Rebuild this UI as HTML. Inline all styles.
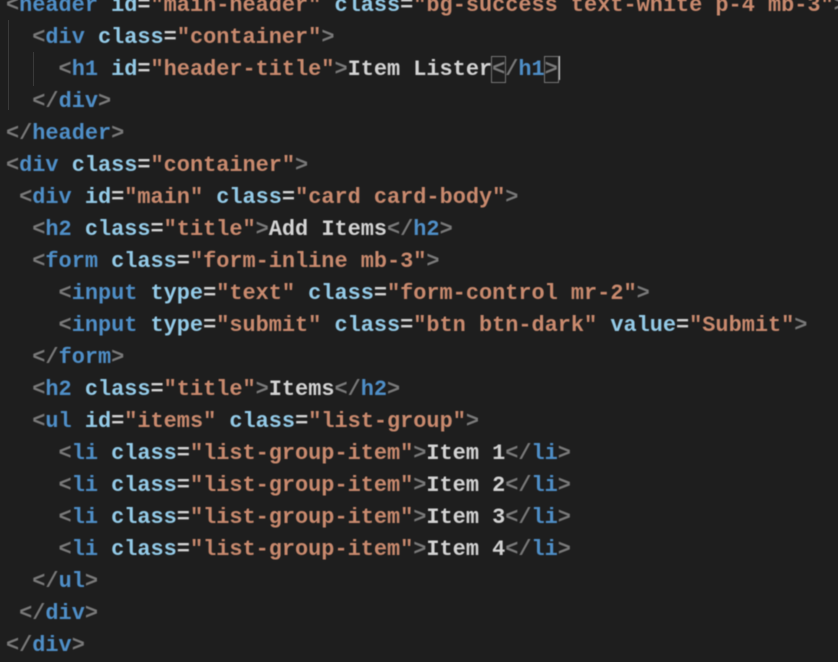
<!DOCTYPE html>
<html><head><meta charset="utf-8"><style>
html,body{margin:0;padding:0;background:#1e1e1e;width:838px;height:660px;overflow:hidden}
pre{margin:0;position:absolute;left:6px;top:-10px;font-family:"Liberation Mono",monospace;font-size:21.9px;line-height:32px;color:#d4d4d4;font-weight:bold;letter-spacing:0;filter:blur(0.6px)}
.t{color:#4f8fc8}.a{color:#94cbe8}.s{color:#c98a6e}.p{color:#7a7a7a}
.g{position:absolute;width:1px;background:#3a3a3a}
.cur{display:inline-block;width:2px;height:24px;background:#d4d4d4;vertical-align:-5px}
.bx{outline:1px solid #777}
</style></head><body>
<div class="g" style="left:8px;top:20px;height:90px"></div>
<div class="g" style="left:33px;top:52px;height:34px"></div>
<pre><span class="p">&lt;</span><span class="t">header</span> <span class="a">id</span>=<span class="s">"main-header"</span> <span class="a">class</span>=<span class="s">"bg-success text-white p-4 mb-3"</span><span class="p">&gt;</span>
  <span class="p">&lt;</span><span class="t">div</span> <span class="a">class</span>=<span class="s">"container"</span><span class="p">&gt;</span>
    <span class="p">&lt;</span><span class="t">h1</span> <span class="a">id</span>=<span class="s">"header-title"</span><span class="p">&gt;</span>Item Lister<span class="p bx">&lt;</span><span class="p">/</span><span class="t">h1</span><span class="p bx">&gt;</span><span class="cur"></span>
  <span class="p">&lt;/</span><span class="t">div</span><span class="p">&gt;</span>
<span class="p">&lt;/</span><span class="t">header</span><span class="p">&gt;</span>
<span class="p">&lt;</span><span class="t">div</span> <span class="a">class</span>=<span class="s">"container"</span><span class="p">&gt;</span>
 <span class="p">&lt;</span><span class="t">div</span> <span class="a">id</span>=<span class="s">"main"</span> <span class="a">class</span>=<span class="s">"card card-body"</span><span class="p">&gt;</span>
  <span class="p">&lt;</span><span class="t">h2</span> <span class="a">class</span>=<span class="s">"title"</span><span class="p">&gt;</span>Add Items<span class="p">&lt;/</span><span class="t">h2</span><span class="p">&gt;</span>
  <span class="p">&lt;</span><span class="t">form</span> <span class="a">class</span>=<span class="s">"form-inline mb-3"</span><span class="p">&gt;</span>
    <span class="p">&lt;</span><span class="t">input</span> <span class="a">type</span>=<span class="s">"text"</span> <span class="a">class</span>=<span class="s">"form-control mr-2"</span><span class="p">&gt;</span>
    <span class="p">&lt;</span><span class="t">input</span> <span class="a">type</span>=<span class="s">"submit"</span> <span class="a">class</span>=<span class="s">"btn btn-dark"</span> <span class="a">value</span>=<span class="s">"Submit"</span><span class="p">&gt;</span>
  <span class="p">&lt;/</span><span class="t">form</span><span class="p">&gt;</span>
  <span class="p">&lt;</span><span class="t">h2</span> <span class="a">class</span>=<span class="s">"title"</span><span class="p">&gt;</span>Items<span class="p">&lt;/</span><span class="t">h2</span><span class="p">&gt;</span>
  <span class="p">&lt;</span><span class="t">ul</span> <span class="a">id</span>=<span class="s">"items"</span> <span class="a">class</span>=<span class="s">"list-group"</span><span class="p">&gt;</span>
    <span class="p">&lt;</span><span class="t">li</span> <span class="a">class</span>=<span class="s">"list-group-item"</span><span class="p">&gt;</span>Item 1<span class="p">&lt;/</span><span class="t">li</span><span class="p">&gt;</span>
    <span class="p">&lt;</span><span class="t">li</span> <span class="a">class</span>=<span class="s">"list-group-item"</span><span class="p">&gt;</span>Item 2<span class="p">&lt;/</span><span class="t">li</span><span class="p">&gt;</span>
    <span class="p">&lt;</span><span class="t">li</span> <span class="a">class</span>=<span class="s">"list-group-item"</span><span class="p">&gt;</span>Item 3<span class="p">&lt;/</span><span class="t">li</span><span class="p">&gt;</span>
    <span class="p">&lt;</span><span class="t">li</span> <span class="a">class</span>=<span class="s">"list-group-item"</span><span class="p">&gt;</span>Item 4<span class="p">&lt;/</span><span class="t">li</span><span class="p">&gt;</span>
  <span class="p">&lt;/</span><span class="t">ul</span><span class="p">&gt;</span>
 <span class="p">&lt;/</span><span class="t">div</span><span class="p">&gt;</span>
<span class="p">&lt;/</span><span class="t">div</span><span class="p">&gt;</span></pre>
</body></html>
